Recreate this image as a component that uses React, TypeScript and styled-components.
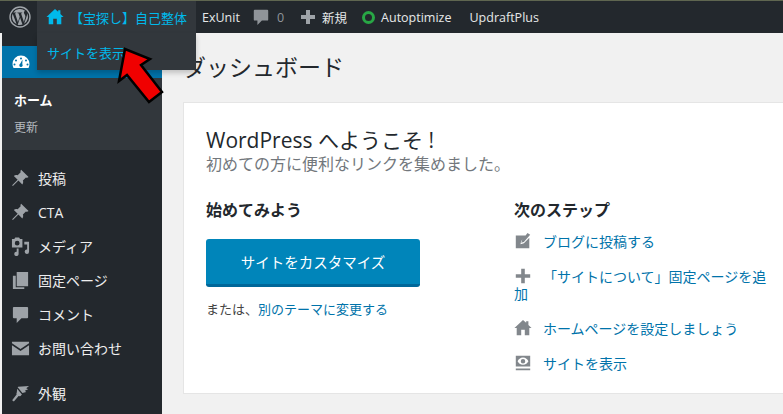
import React from "react";
import styled, { createGlobalStyle } from "styled-components";

const FONT = `"Open Sans", "Noto Sans CJK JP", sans-serif`;

const Global = createGlobalStyle`
  html, body { margin: 0; padding: 0; background: #f1f1f1; }
  * { box-sizing: border-box; }
  body { font-family: ${FONT}; }
`;

const Page = styled.div`
  width: 783px; height: 414px; overflow: hidden; position: relative;
  background: #f1f1f1; display: flex; flex-direction: column;
  border-top: 1px solid #5f6650;
`;
const Bar = styled.div`
  height: 32px; flex: none; background: #23282d; display: flex; align-items: center;
  padding-left: 2px; color: #eee; font-size: 13px;
`;
const LogoCell = styled.div`
  width: 35px; display: flex; justify-content: center; color: #a0a5aa;
`;
const SiteCell = styled.div`
  position: relative; width: 159px; height: 32px; background: #32373c; display: flex; align-items: center;
  color: #00b9eb; padding-left: 9px; gap: 9px; font-size: 13px; white-space: nowrap; margin-right: 6px;
`;
const SiteName = styled.span` margin-left: -3px; `;
const Flyout = styled.div`
  position: absolute; left: 0; top: 32px; width: 159px; height: 37px; background: #32373c;
  color: #00b9eb; font-size: 13px; padding: 10px 0 0 10px; z-index: 3;
  box-shadow: 0 3px 5px rgba(0,0,0,.2);
`;
const BarItem = styled.span<{ $ml?: number; $muted?: boolean }>`
  display: inline-flex; align-items: center; gap: 6px; white-space: nowrap;
  margin-left: ${p => p.$ml ?? 0}px; color: ${p => (p.$muted ? "#8f9499" : "#e6e8e9")}; font-size: 12.5px;
`;
const Count = styled.span` color: #8f9499; font-size: 12.5px; margin-left: 1px; `;
const Ring = styled.span`
  width: 13px; height: 13px; border-radius: 50%; border: 3px solid #28a745; display: inline-block; margin-right: 0;
`;
const Body = styled.div` flex: 1; display: flex; min-height: 0; `;
const Side = styled.nav`
  width: 160px; margin-left: 2px; flex: none; background: #23282d; padding-top: 13px; color: #eee; font-size: 14px;
`;
const Active = styled.div`
  height: 32px; background: #0073aa; display: flex; align-items: center; padding-left: 9px; color: #fff;
`;
const Sub = styled.div`
  background: #32373c; height: 72px; padding: 13px 0 0 12px; display: flex; flex-direction: column; gap: 9px;
`;
const SubStrong = styled.div` color: #fff; font-weight: 700; font-size: 13px; line-height: 19px; `;
const SubItem = styled.div` color: #b4b9be; font-size: 12px; line-height: 18px; `;
const Menu = styled.div` padding-top: 11px; `;
const MenuItem = styled.div<{ $gap?: number }>`
  height: 34px; display: flex; align-items: center; padding-left: 9px; gap: 8px; color: #eee; font-size: 14px;
  margin-top: ${p => p.$gap ?? 0}px;
`;
const MenuIcon = styled.svg`
  width: 19px; height: 19px; fill: #9ea3a8; flex: none;
`;
const Main = styled.main`
  flex: 1; min-width: 0; padding: 15px 0 0 21px;
`;
const Title = styled.h1`
  margin: 0 0 16px; font-size: 23px; font-weight: 400; line-height: 38px; color: #23282d; height: 38px;
`;
const Card = styled.section`
  width: 600px; height: 292px; background: #fff; border: 1px solid #e5e5e5; border-right: none;
  padding: 23px 0 0 22px;
`;
const Welcome = styled.h2`
  margin: 0; font-size: 21px; font-weight: 400; line-height: 28px; color: #23282d;
`;
const About = styled.p`
  margin: 0; font-size: 16px; line-height: 20px; color: #72777c;
`;
const Columns = styled.div` display: flex; margin-top: 25px; `;
const Left = styled.div` width: 308px; flex: none; `;
const Right = styled.div` width: 262px; flex: none; `;
const Heading = styled.h3`
  margin: 0; font-size: 16px; line-height: 22px; font-weight: 700; color: #23282d;
`;
const Cta = styled.div`
  margin-top: 18px; width: 214px; height: 48px; background: #0085ba; border-bottom: 3px solid #006799;
  border-radius: 3px; color: #fff; font-size: 14.5px; display: flex; align-items: center; justify-content: center;
`;
const Or = styled.p`
  margin: 12px 0 0; font-size: 13px; line-height: 20px; color: #444;
`;
const A = styled.span` color: #0073aa; `;
const Steps = styled.ul` list-style: none; margin: 11px 0 0; padding: 0; `;
const Step = styled.li`
  font-size: 14px; line-height: 17px; padding: 0 0 17px; color: #0073aa;
`;
const StepIcon = styled.svg`
  width: 18px; height: 18px; fill: #82878c; display: inline-block; vertical-align: -3px; margin-right: 11px;
`;
const Arrow = styled.svg`
  position: absolute; left: 115px; top: 44px; width: 60px; height: 62px; z-index: 5;
`;

const Wp = () => (
  <svg width="22" height="22" viewBox="0 0 22 22" fill="none">
    <circle cx="11" cy="11" r="10" stroke="currentColor" strokeWidth="1.4" />
    <path fill="currentColor" d="M3 11c0 3 1.8 5.8 4.5 7.1L3.7 7.7A8 8 0 0 0 3 11Zm13.4-.4c0-1-.4-1.700-.7-2.200-.4-.7-.8-1.200-.8-1.900 0-.7.6-1.400 1.400-1.400h.1A8 8 0 0 0 4.300 6.600h.5c.8 0 2.100-.1 2.100-.1.400 0 .5.600 0 .7 0 0-.4 0-.9.100l2.900 8.700 1.800-5.300-1.200-3.400c-.4 0-.8-.1-.8-.1-.4 0-.4-.7 0-.7 0 0 1.300.1 2.100.1s2.100-.1 2.100-.1c.4 0 .5.600 0 .7 0 0-.4 0-.9.100l2.900 8.600.8-2.600c.3-1.100.6-1.900.6-2.700ZM11.100 11.700l-2.400 7a8 8 0 0 0 4.900-.1l-.1-.1-2.400-6.800Zm6.900-4.500.1.800c0 .8-.1 1.700-.6 2.800l-2.400 7A8 8 0 0 0 18 7.200Z" />
  </svg>
);

const Home = ({ size = 16 }: { size?: number }) => (
  <svg width={size} height={size} viewBox="0 0 20 20" fill="currentColor">
    <path d="M10 1 .5 10H3v8h5v-6h4v6h5v-8h2.500L16 6.700V2.500h-2.500v1.800L10 1Z" />
  </svg>
);

const Gauge = () => (
  <svg width="20" height="20" viewBox="0 0 20 20" fill="#fff">
    <path d="M10 3.500A8.500 8.500 0 0 0 1.500 12c0 1.500.4 2.800 1 4h15c.6-1.200 1-2.500 1-4A8.500 8.500 0 0 0 10 3.500Zm0 2a1 1 0 1 1 0 2 1 1 0 0 1 0-2ZM5 7.500a1 1 0 1 1 0 2 1 1 0 0 1 0-2Zm10 0a1 1 0 1 1 0 2 1 1 0 0 1 0-2ZM3.500 11.500a1 1 0 1 1 0 2 1 1 0 0 1 0-2Zm13 0a1 1 0 1 1 0 2 1 1 0 0 1 0-2ZM10 15a1.700 1.700 0 0 1-.8-3.200L11.500 7.500l-.2 4.700A1.700 1.700 0 0 1 10 15Z" fillRule="evenodd" />
  </svg>
);

const Pin = () => (
  <MenuIcon viewBox="0 0 20 20"><path d="M11.500 1.500 18.500 8.500c-.8.700-1.800.9-2.800.5L12.500 12.200c.6 1.300.4 2.900-.6 4L7.800 12.100 2 18l-.8-.8 5.800-5.900-4-4c1.100-1 2.700-1.200 4-.6l3.200-3.200c-.4-1-.2-2 .5-2.800Z" /></MenuIcon>
);
const Media = () => (
  <MenuIcon viewBox="0 0 20 20"><path fillRule="evenodd" d="M1 2h2.500l1-1.500h4L9.500 2H12v9H1V2Zm5.500 2a2.500 2.500 0 1 0 0 5 2.500 2.500 0 0 0 0-5ZM14 5h5v10.500a2.300 2.300 0 1 1-2-2.300V8h-3V5ZM6 12v3.500a2.300 2.300 0 1 0 2 2.300V12H6Z" /></MenuIcon>
);
const Pages = () => (
  <MenuIcon viewBox="0 0 20 20"><path d="M6 1h12v15H6V1ZM2 5h3v12h9v2H2V5Z" /></MenuIcon>
);
const Bubble = () => (
  <MenuIcon viewBox="0 0 20 20"><path d="M3 2h14a1 1 0 0 1 1 1v10a1 1 0 0 1-1 1h-6l-5 5v-5H3a1 1 0 0 1-1-1V3a1 1 0 0 1 1-1Z" /></MenuIcon>
);
const Mail = () => (
  <MenuIcon viewBox="0 0 20 20"><path d="M1 3h18v1.500l-9 6-9-6V3Zm0 3.500 9 6 9-6V17H1V6.500Z" /></MenuIcon>
);
const Brush = () => (
  <MenuIcon viewBox="0 0 20 20"><path d="M7.500 3 19 2l-3 2.500 2 1-3.500 1.500 1.500 1.500-4 1-5-6ZM6.500 5l5 6-1.500 1.500c-.5.500-1.500.3-2 .2L3 18.500 1.200 17l4.700-6c-.2-.7-.3-1.600.2-2.100L6.500 5Z" /></MenuIcon>
);

export default function App() {
  return (
    <>
      <Global />
      <Page>
        <Bar>
          <LogoCell><Wp /></LogoCell>
          <SiteCell>
            <Home size={18} />
            <SiteName>【宝探し】自己整体</SiteName>
            <Flyout>サイトを表示</Flyout>
          </SiteCell>
          <BarItem>ExUnit</BarItem>
          <BarItem $ml={12} $muted>
            <svg width="18" height="18" viewBox="0 0 20 20" fill="#8f9499"><path d="M3 2h14a1 1 0 0 1 1 1v10a1 1 0 0 1-1 1h-6l-5 5v-5H3a1 1 0 0 1-1-1V3a1 1 0 0 1 1-1Z" /></svg>
            <Count>0</Count>
          </BarItem>
          <BarItem $ml={16}>
            <svg width="16" height="16" viewBox="0 0 16 16" fill="#9ea3a8"><path d="M6 1h4v5h5v4h-5v5H6v-5H1V6h5V1Z" /></svg>
            新規
          </BarItem>
          <BarItem $ml={15}><Ring />Autoptimize</BarItem>
          <BarItem $ml={18}>UpdraftPlus</BarItem>
        </Bar>
        <Body>
          <Side>
            <Active><Gauge /></Active>
            <Sub>
              <SubStrong>ホーム</SubStrong>
              <SubItem>更新</SubItem>
            </Sub>
            <Menu>
              <MenuItem><Pin />投稿</MenuItem>
              <MenuItem><Pin />CTA</MenuItem>
              <MenuItem><Media />メディア</MenuItem>
              <MenuItem><Pages />固定ページ</MenuItem>
              <MenuItem><Bubble />コメント</MenuItem>
              <MenuItem><Mail />お問い合わせ</MenuItem>
              <MenuItem $gap={11}><Brush />外観</MenuItem>
            </Menu>
          </Side>
          <Main>
            <Title>ダッシュボード</Title>
            <Card>
              <Welcome>WordPress へようこそ !</Welcome>
              <About>初めての方に便利なリンクを集めました。</About>
              <Columns>
                <Left>
                  <Heading>始めてみよう</Heading>
                  <Cta>サイトをカスタマイズ</Cta>
                  <Or>または、<A>別のテーマに変更する</A></Or>
                </Left>
                <Right>
                  <Heading>次のステップ</Heading>
                  <Steps>
                    <Step>
                      <StepIcon viewBox="0 0 20 20"><path d="M2 4h11l-5 6-.8 3.500L11 12.500l6-6V18H2V4Zm13-3 3 2-7 8-3 1 1-3 6-8Z" /></StepIcon>
                      ブログに投稿する
                    </Step>
                    <Step>
                      <StepIcon viewBox="0 0 20 20"><path d="M8 2h4v6h6v4h-6v6H8v-6H2V8h6V2Z" /></StepIcon>
                      「サイトについて」固定ページを追加
                    </Step>
                    <Step>
                      <StepIcon viewBox="0 0 20 20"><path d="M10 1 .5 10H3v8h5v-6h4v6h5v-8h2.500L16 6.700V2.500h-2.500v1.800L10 1Z" /></StepIcon>
                      ホームページを設定しましょう
                    </Step>
                    <Step>
                      <StepIcon viewBox="0 0 20 20"><path fillRule="evenodd" d="M2 2h16v12H2V2Zm8 2c-3 0-5 2-6 4 1 2 3 4 6 4s5-2 6-4c-1-2-3-4-6-4Zm0 1.500a2.500 2.500 0 1 1 0 5 2.500 2.500 0 0 1 0-5ZM2 16h16v2H2v-2Z" /></StepIcon>
                      サイトを表示
                    </Step>
                  </Steps>
                </Right>
              </Columns>
            </Card>
          </Main>
        </Body>
        <Arrow viewBox="0 0 60 62">
          <path d="M10 4 4 36l8-6 22 27 13-10L26 20l9-6L10 4Z" fill="#f00000" stroke="#000" strokeWidth="2.500" strokeLinejoin="miter" />
        </Arrow>
      </Page>
    </>
  );
}
